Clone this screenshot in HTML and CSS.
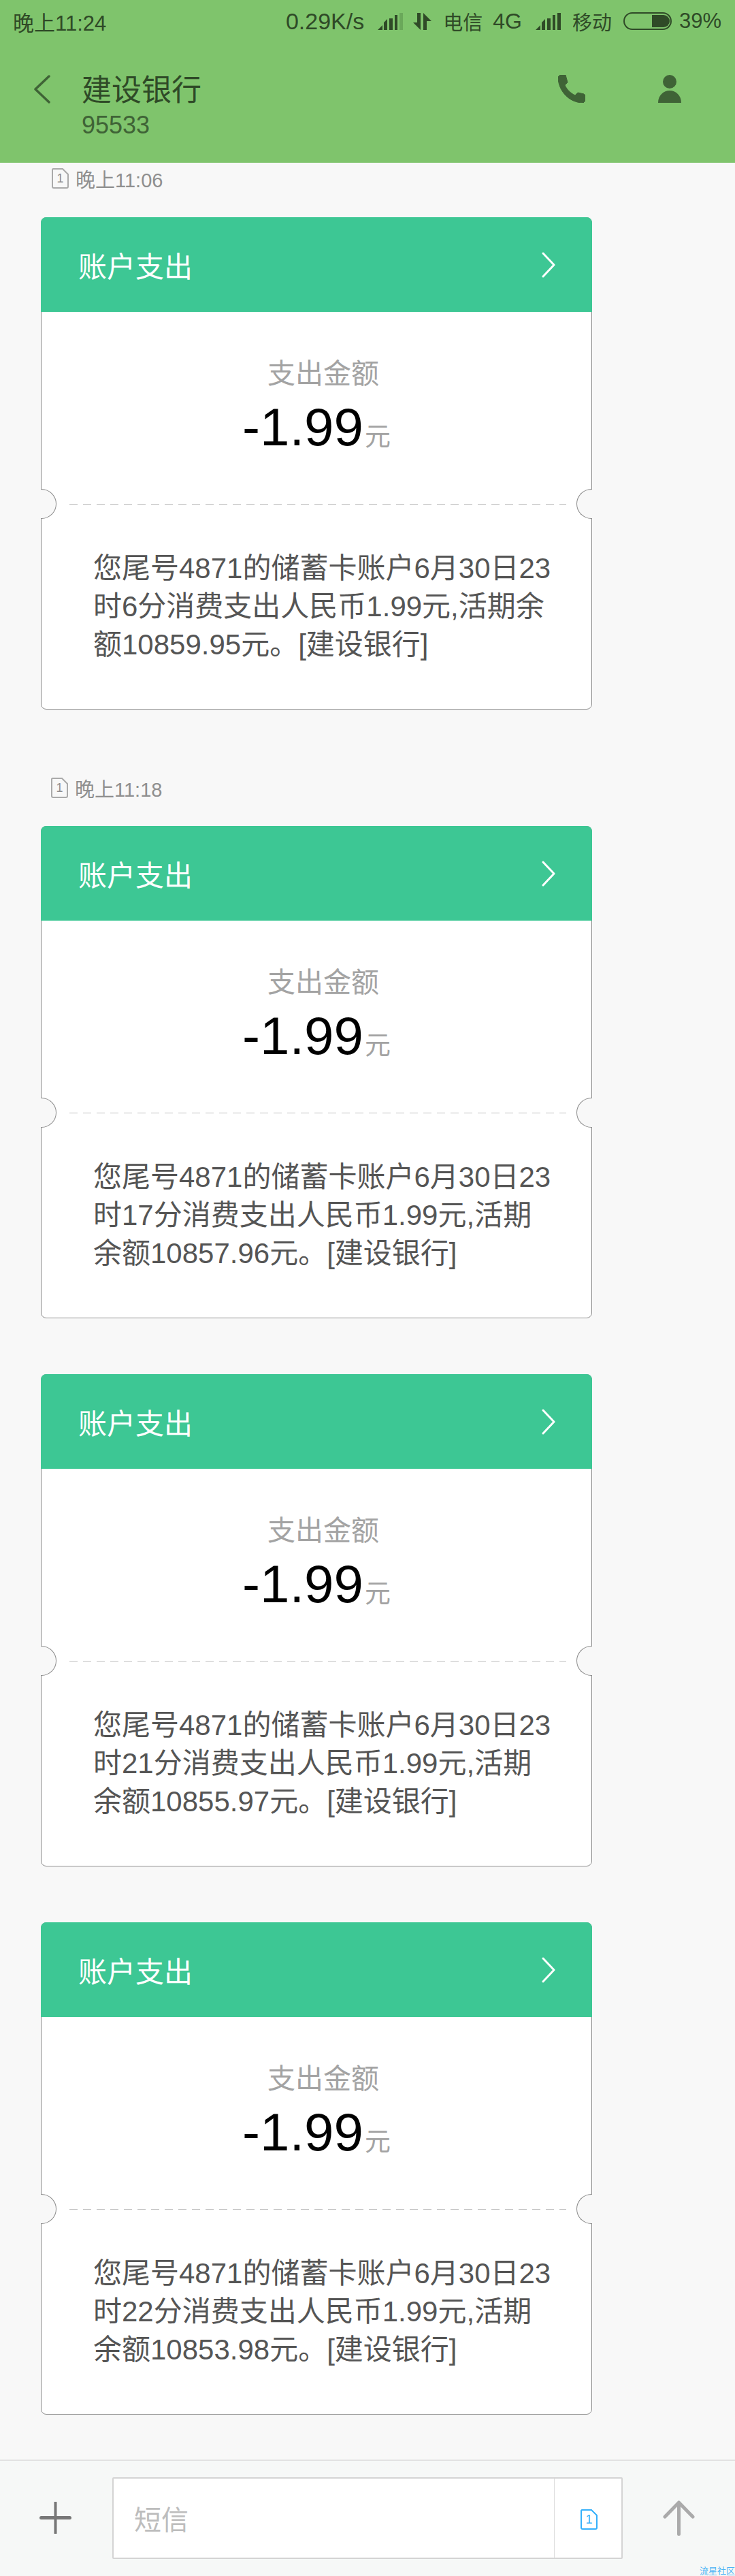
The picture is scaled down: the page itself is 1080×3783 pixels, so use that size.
FILE: index.html
```html
<!DOCTYPE html>
<html lang="zh-CN">
<head>
    <meta charset="UTF-8">
    <meta name="viewport" content="width=device-width, initial-scale=1.0">
    <title>建设银行</title>
    <link rel="stylesheet" href="styles.css">
</head>
<body>
    <div class="app">
        <header class="topbar">
            <div class="status">
                <span class="clock">晚上11:24</span>
                <div class="status-right">
                    <span class="speed">0.29K/s</span>
                    <svg class="signal" viewBox="0 0 37 25"><path d="M0 25l7-7v7zM9 25V14l5-5v16zM17 25V8h5v17zM25 25V3h4v22z" fill="#2f4a27"/><path d="M32 25V0h5v25z" fill="#6aa85a"/></svg>
                    <svg class="updown" viewBox="0 0 27 25"><path d="M6 0h5v25L0 14h6zM15 0l12 12h-7v13h-5z" fill="#2f4a27"/></svg>
                    <span class="carrier">电信</span>
                    <span class="net">4G</span>
                    <svg class="signal two" viewBox="0 0 37 25"><path d="M0 25l7-7v7zM9 25V14l5-5v16zM17 25V8h5v17zM25 25V3h4v22zM32 25V0h5v25z" fill="#2f4a27"/></svg>
                    <span class="carrier">移动</span>
                    <svg class="battery" viewBox="0 0 71 26"><rect x="1" y="1" width="69" height="24" rx="12" fill="none" stroke="#2f4a27" stroke-width="2"/><path d="M42 4h17a9 9 0 0 1 0 18H42z" fill="#2f4a27"/></svg>
                    <span class="percent">39%</span>
                </div>
            </div>
            <div class="toolbar">
                <svg class="back" viewBox="0 0 24 42"><path d="M22 2L2 21l20 19" fill="none" stroke="#3f6336" stroke-width="3.5" stroke-linecap="round" stroke-linejoin="round"/></svg>
                <div class="contact">
                    <h1>建设银行</h1>
                    <p>95533</p>
                </div>
                <svg class="phone" viewBox="0 0 40 41"><path d="M3 0h8l3 11-4 4c3 7 9 12 15 15l4-4 9 2 2 2v8l-3 3C15 41 0 22 0 3z" fill="#3f6336" stroke="#3f6336" stroke-linejoin="round"/></svg>
                <svg class="person" viewBox="0 0 34 41"><circle cx="17" cy="10" r="10" fill="#3f6336"/><path d="M0 41C0 30 8 23 17 23s17 7 17 18z" fill="#3f6336"/></svg>
            </div>
        </header>

        <main class="thread">
            <div class="stamp first">
                <svg class="sim" viewBox="0 0 25 30"><path d="M2 1h14l8 8v18a2 2 0 0 1-2 2H3a2 2 0 0 1-2-2V2z"/><text x="12.5" y="21">1</text></svg>
                <span>晚上11:06</span>
            </div>
            <article class="card">
                <div class="card-head">
                    <span>账户支出</span>
                    <svg class="chev" viewBox="0 0 20 38"><path d="M2 2l16 17L2 36" fill="none" stroke="#fff" stroke-width="3" stroke-linecap="round" stroke-linejoin="round"/></svg>
                </div>
                <div class="card-sum">
                    <div class="sum-label">支出金额</div>
                    <div class="sum-value">-1.99<small>元</small></div>
                </div>
                <div class="tear"><i class="notch left"></i><i class="notch right"></i></div>
                <p class="card-text">您尾号4871的储蓄卡账户6月30日23时6分消费支出人民币1.99元,活期余额10859.95元。[建设银行]</p>
            </article>

            <div class="stamp">
                <svg class="sim" viewBox="0 0 25 30"><path d="M2 1h14l8 8v18a2 2 0 0 1-2 2H3a2 2 0 0 1-2-2V2z"/><text x="12.5" y="21">1</text></svg>
                <span>晚上11:18</span>
            </div>
            <article class="card">
                <div class="card-head">
                    <span>账户支出</span>
                    <svg class="chev" viewBox="0 0 20 38"><path d="M2 2l16 17L2 36" fill="none" stroke="#fff" stroke-width="3" stroke-linecap="round" stroke-linejoin="round"/></svg>
                </div>
                <div class="card-sum">
                    <div class="sum-label">支出金额</div>
                    <div class="sum-value">-1.99<small>元</small></div>
                </div>
                <div class="tear"><i class="notch left"></i><i class="notch right"></i></div>
                <p class="card-text">您尾号4871的储蓄卡账户6月30日23时17分消费支出人民币1.99元,活期余额10857.96元。[建设银行]</p>
            </article>

            <article class="card next">
                <div class="card-head">
                    <span>账户支出</span>
                    <svg class="chev" viewBox="0 0 20 38"><path d="M2 2l16 17L2 36" fill="none" stroke="#fff" stroke-width="3" stroke-linecap="round" stroke-linejoin="round"/></svg>
                </div>
                <div class="card-sum">
                    <div class="sum-label">支出金额</div>
                    <div class="sum-value">-1.99<small>元</small></div>
                </div>
                <div class="tear"><i class="notch left"></i><i class="notch right"></i></div>
                <p class="card-text">您尾号4871的储蓄卡账户6月30日23时21分消费支出人民币1.99元,活期余额10855.97元。[建设银行]</p>
            </article>

            <article class="card next">
                <div class="card-head">
                    <span>账户支出</span>
                    <svg class="chev" viewBox="0 0 20 38"><path d="M2 2l16 17L2 36" fill="none" stroke="#fff" stroke-width="3" stroke-linecap="round" stroke-linejoin="round"/></svg>
                </div>
                <div class="card-sum">
                    <div class="sum-label">支出金额</div>
                    <div class="sum-value">-1.99<small>元</small></div>
                </div>
                <div class="tear"><i class="notch left"></i><i class="notch right"></i></div>
                <p class="card-text">您尾号4871的储蓄卡账户6月30日23时22分消费支出人民币1.99元,活期余额10853.98元。[建设银行]</p>
            </article>
        </main>

        <footer class="composer">
            <svg class="plus" viewBox="0 0 47 47"><path d="M23.5 1v45" fill="none" stroke="#777" stroke-width="4" stroke-linecap="round"/><path d="M2.5 23.5h42" fill="none" stroke="#777" stroke-width="5" stroke-linecap="round"/></svg>
            <div class="input">
                <span class="placeholder">短信</span>
                <div class="sim-pick">
                    <svg class="sim blue" viewBox="0 0 25 30"><path d="M2 1h14l8 8v18a2 2 0 0 1-2 2H3a2 2 0 0 1-2-2V2z"/><text x="12.5" y="21">1</text></svg>
                </div>
            </div>
            <svg class="send" viewBox="0 0 47 52"><path d="M23.5 49.5V3M3 24L23.5 3 44 24" fill="none" stroke="#aaa" stroke-width="5" stroke-linecap="round" stroke-linejoin="round"/></svg>
            <span class="watermark">流星社区</span>
        </footer>
    </div>
</body>
</html>
```

FILE: styles.css
```css
* {
    box-sizing: border-box;
}
body {
    margin: 0;
    background-color: #f8f8f8;
    font-family: "Liberation Sans", "Noto Sans CJK SC", sans-serif;
}
.app {
    width: 1080px;
    height: 3783px;
    display: flex;
    flex-direction: column;
    overflow: hidden;
}

/* top green bar */
.topbar {
    height: 239px;
    flex: none;
    background-color: #7fc46c;
    color: #2f4a27;
}
.status {
    height: 62px;
    display: flex;
    align-items: center;
    justify-content: space-between;
    padding: 0 20px 0 19px;
    font-size: 31px;
}
.status-right {
    display: flex;
    align-items: center;
}
.speed {
    font-size: 34px;
}
.signal {
    width: 37px;
    height: 25px;
    margin-left: 20px;
}
.updown {
    width: 27px;
    height: 25px;
    margin-left: 15px;
}
.carrier {
    margin-left: 17px;
    font-size: 29px;
}
.net {
    margin-left: 15px;
    font-size: 32px;
}
.battery {
    width: 71px;
    height: 26px;
    margin-left: 17px;
}
.percent {
    margin-left: 11px;
}
.toolbar {
    display: flex;
    align-items: flex-start;
    padding: 48px 0 0 50px;
}
.back {
    width: 24px;
    height: 42px;
}
.contact {
    margin-left: 46px;
    flex: 1;
}
.contact h1 {
    margin: 0;
    font-size: 44px;
    font-weight: 400;
    line-height: 46px;
}
.contact p {
    margin: 7px 0 0;
    font-size: 36px;
    line-height: 42px;
    color: #3f6336;
}
.phone {
    width: 40px;
    height: 41px;
}
.person {
    width: 34px;
    height: 41px;
    margin: 0 79px 0 107px;
}

/* messages */
.thread {
    flex: 1;
    padding: 0 210px 0 60px;
}
.stamp {
    display: flex;
    align-items: center;
    gap: 10px;
    height: 30px;
    margin: 100px 0 41px 15px;
    font-size: 29px;
    color: #8f8f8f;
}
.stamp.first {
    margin: 8px 0 42px 16px;
}
.sim {
    display: block;
    width: 25px;
    height: 30px;
    fill: none;
    stroke: #aaa;
    stroke-width: 2;
}
.sim text {
    fill: #8f8f8f;
    stroke: none;
    font-size: 18px;
    text-anchor: middle;
}
.sim.blue {
    stroke: #35b0fb;
}
.sim.blue text {
    fill: #35b0fb;
}
.card {
    width: 810px;
    height: 723px;
    background-color: #fff;
    border: 1px solid #8c8c8c;
    border-radius: 8px;
}
.card.next {
    margin-top: 82px;
}
.card-head {
    height: 139px;
    margin: -1px -1px 0;
    padding: 0 54px 0 55px;
    display: flex;
    align-items: center;
    justify-content: space-between;
    background-color: #3dc794;
    border-radius: 8px 8px 0 0;
    font-size: 42px;
    color: #fff;
}
.chev {
    width: 20px;
    height: 38px;
}
.card-sum {
    height: 282px;
    padding-top: 61px;
    text-align: center;
}
.sum-label {
    padding-left: 20px;
    font-size: 41px;
    line-height: 60px;
    color: #a3a3a3;
}
.sum-value {
    margin-top: 3px;
    font-size: 78px;
    line-height: 90px;
    color: #000;
}
.sum-value small {
    margin-left: 2px;
    font-size: 38px;
    color: #a3a3a3;
}
.tear {
    position: relative;
    height: 1px;
    margin: 0 37px 0 41px;
    background-image: repeating-linear-gradient(to right, #bdbdbd 0, #bdbdbd 12px, transparent 12px, transparent 20px);
}
.notch {
    position: absolute;
    top: -22px;
    width: 23px;
    height: 44px;
    background-color: #f8f8f8;
    border: 1px solid #8c8c8c;
}
.notch.left {
    left: -42px;
    border-left: 0;
    border-radius: 0 22px 22px 0;
}
.notch.right {
    right: -38px;
    border-right: 0;
    border-radius: 22px 0 0 22px;
}
.card-text {
    margin: 0;
    padding: 66px 52px 0 76px;
    font-size: 42px;
    line-height: 56px;
    color: #555;
}

/* bottom input row */
.composer {
    position: relative;
    height: 171px;
    flex: none;
    display: flex;
    align-items: flex-start;
    padding-top: 24px;
    background-color: #f6f8f7;
    border-top: 2px solid #e2e2e2;
}
.plus {
    width: 47px;
    height: 47px;
    margin: 36px 0 0 58px;
}
.input {
    width: 750px;
    height: 120px;
    margin-left: 60px;
    display: flex;
    align-items: center;
    background-color: #fff;
    border: 2px solid #d4d4d4;
    border-radius: 2px;
}
.placeholder {
    flex: 1;
    padding-left: 30px;
    font-size: 40px;
    color: #bdbdbd;
}
.sim-pick {
    width: 99px;
    height: 100%;
    padding: 45px 0 0 38px;
    border-left: 1px solid #dcdcdc;
}
.send {
    width: 47px;
    height: 52px;
    margin: 34px 0 0 59px;
}
.watermark {
    position: absolute;
    right: 0;
    bottom: 0;
    font-size: 13px;
    line-height: 14px;
    color: #4db4f5;
}
```
